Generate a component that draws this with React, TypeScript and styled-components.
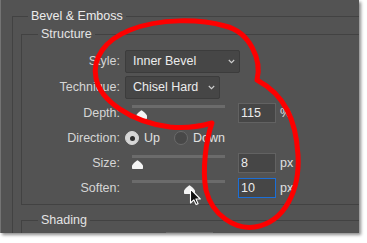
import styled, { createGlobalStyle } from "styled-components";

const GlobalStyle = createGlobalStyle`
  html, body {
    margin: 0;
    padding: 0;
    background: #fff;
  }
  body {
    font-family: "Liberation Sans", Arial, sans-serif;
  }
`;

export default function App() {
  return (
    <>
      <GlobalStyle />
      <Stage>
        <Panel>
          <Group $pad="4px 0 0 8px">
            <Title $offset={7} $strong>Bevel &amp; Emboss</Title>
            <Group $pad="0 0 4px 0">
              <Title $offset={16}>Structure</Title>
              <Rows>
                <Row $h={26}>
                  <Label>Style:</Label>
                  <Dropdown $w={115}>
                    Inner Bevel
                    <Chevron />
                  </Dropdown>
                </Row>
                <Row $h={26}>
                  <Label>Technique:</Label>
                  <Dropdown $w={95}>
                    Chisel Hard
                    <Chevron />
                  </Dropdown>
                </Row>
                <Row $h={26}>
                  <Label>Depth:</Label>
                  <SliderField at={4} value="115" unit="%" />
                </Row>
                <Row $h={24}>
                  <Label>Direction:</Label>
                  <RadioGroup>
                    <RadioOption>
                      <RadioDot $on />
                      Up
                    </RadioOption>
                    <RadioOption>
                      <RadioDot />
                      Down
                    </RadioOption>
                  </RadioGroup>
                </Row>
                <Row $h={25}>
                  <Label>Size:</Label>
                  <SliderField at={0} value="8" unit="px" />
                </Row>
                <Row $h={25}>
                  <Label>Soften:</Label>
                  <SliderField at={52} value="10" unit="px" focused />
                </Row>
              </Rows>
            </Group>
            <Group $pad="0" $gap={8}>
              <Title $offset={16}>Shading</Title>
              <ShadingPreview />
            </Group>
          </Group>
        </Panel>
        <Annotation width="367" height="243" viewBox="0 0 367 243">
          <path
            d="M257 80 C262 60, 250 32, 225 26 C200 19, 160 18, 130 30 C105 40, 92 58, 96 78 C100 100, 130 122, 170 127 C190 129, 205 125, 212 123 C206 140, 202 170, 206 190 C212 215, 235 230, 255 227 C285 222, 300 190, 298 155 C296 120, 285 95, 257 80 Z"
            fill="none"
            stroke="#fd0000"
            strokeWidth="5"
            strokeLinejoin="round"
          />
          <g transform="translate(190.5 189)">
            <path
              d="M0 0 V14 L3.3 10.8 L5.6 15.6 L7.6 14.7 L5.4 10 H9.8 Z"
              fill="#111"
              stroke="#fff"
              strokeWidth="1.1"
              strokeLinejoin="round"
            />
          </g>
        </Annotation>
      </Stage>
    </>
  );
}

function Chevron() {
  return (
    <svg width="7" height="5" viewBox="0 0 7 5">
      <path d="M0.8 1 L3.5 3.7 L6.2 1" fill="none" stroke="#cfcfcf" strokeWidth="1.1" />
    </svg>
  );
}

function SliderField({ at, value, unit, focused }: { at: number; value: string; unit: string; focused?: boolean }) {
  return (
    <>
      <Slider>
        <Track />
        <Thumb $at={at} width="11" height="9" viewBox="0 0 11 9">
          <path d="M5.5 0.3 C6.2 0.3 11 4.6 11 5.8 V8.3 Q11 9 10.3 9 H0.7 Q0 9 0 8.3 V5.8 C0 4.6 4.8 0.3 5.5 0.3 Z" fill="#f4f4f4" />
        </Thumb>
      </Slider>
      <NumberBox defaultValue={value} readOnly $focused={focused} />
      <Unit>{unit}</Unit>
    </>
  );
}

const Stage = styled.div`
  position: relative;
  width: 367px;
  height: 243px;
  overflow: hidden;
`;

const Panel = styled.div`
  box-sizing: border-box;
  width: 359px;
  height: 233px;
  padding: 9px 0 0 11px;
  background: #535353;
  border-left: 1px solid #747474;
  overflow: hidden;
  box-shadow: 2px 2px 3px rgba(0, 0, 0, 0.45);
  font-size: 12.5px;
  color: #d6d6d6;
`;

const Group = styled.fieldset<{ $pad: string; $gap?: number }>`
  margin: ${(p) => p.$gap ?? 0}px 0 0 0;
  padding: ${(p) => p.$pad};
  border: 1px solid #424242;
  width: 420px;
  min-width: 0;
`;

const Title = styled.legend<{ $offset: number; $strong?: boolean }>`
  margin-left: ${(p) => p.$offset}px;
  padding: 0 3px;
  line-height: 14px;
  font-size: 12.5px;
  color: ${(p) => (p.$strong ? "#ececec" : "#e4e4e4")};
`;

const Rows = styled.div`
  padding-top: 7px;
`;

const Row = styled.div<{ $h: number }>`
  display: flex;
  align-items: center;
  height: ${(p) => p.$h}px;
`;

const Label = styled.span`
  flex: none;
  width: 98px;
  margin-right: 5px;
  text-align: right;
`;

const Dropdown = styled.div<{ $w: number }>`
  box-sizing: border-box;
  display: flex;
  align-items: center;
  justify-content: space-between;
  width: ${(p) => p.$w}px;
  height: 23px;
  padding: 0 4px 0 7px;
  background: #464646;
  border: 1px solid #3c3c3c;
  border-radius: 2px;
  color: #ececec;
`;

const Slider = styled.div`
  position: relative;
  flex: none;
  width: 93px;
  height: 20px;
  margin-left: 7px;
`;

const Track = styled.div`
  margin-top: 2px;
  height: 3px;
  background: #6b6b6b;
`;

const Thumb = styled.svg<{ $at: number }>`
  position: absolute;
  top: 7px;
  left: ${(p) => p.$at}px;
`;

const NumberBox = styled.input<{ $focused?: boolean }>`
  box-sizing: border-box;
  width: 38px;
  height: 20px;
  margin: 0 0 0 13px;
  padding: 0 0 0 2px;
  background: #464646;
  border: 1px solid ${(p) => (p.$focused ? "#1b6fd8" : "#626262")};
  border-radius: 0;
  outline: none;
  font-family: "Liberation Sans", Arial, sans-serif;
  font-size: 12.5px;
  color: #ececec;
`;

const Unit = styled.span`
  margin-left: 4px;
  color: #e0e0e0;
`;

const RadioGroup = styled.div`
  display: flex;
  align-items: center;
  gap: 14px;
`;

const RadioOption = styled.label`
  display: flex;
  align-items: center;
  gap: 5px;
  color: #e0e0e0;
`;

const RadioDot = styled.span<{ $on?: boolean }>`
  box-sizing: border-box;
  display: flex;
  align-items: center;
  justify-content: center;
  width: 14px;
  height: 14px;
  border-radius: 50%;
  background: ${(p) => (p.$on ? "#d6d6d6" : "#484848")};
  border: 1px solid ${(p) => (p.$on ? "#d6d6d6" : "#6a6a6a")};

  &::after {
    content: "";
    display: ${(p) => (p.$on ? "block" : "none")};
    width: 5px;
    height: 5px;
    border-radius: 50%;
    background: #2e2e2e;
  }
`;

const ShadingPreview = styled.div`
  width: 47px;
  height: 10px;
  margin: 5px 0 0 144px;
  background: #575757;
  border-top: 1px solid #6a6a6a;
`;

const Annotation = styled.svg`
  position: absolute;
  left: 0;
  top: 0;
  pointer-events: none;
`;
